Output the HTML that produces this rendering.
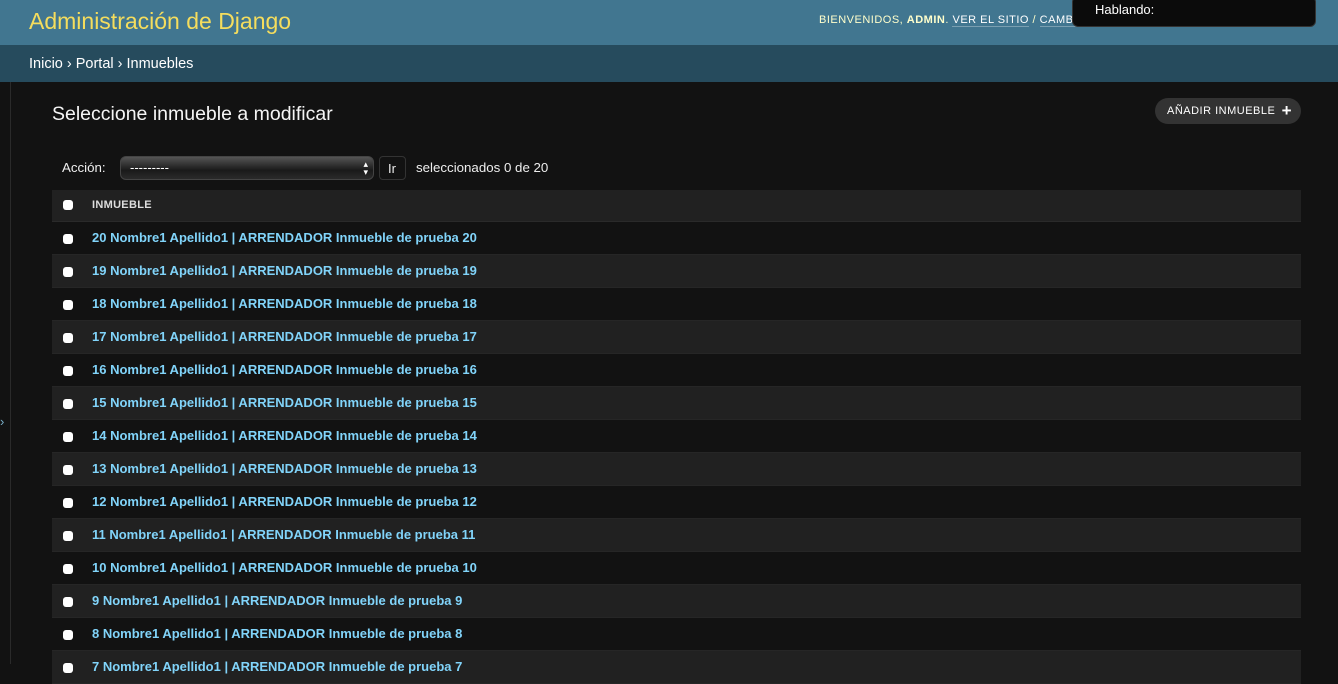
<!DOCTYPE html>
<html><head><meta charset="utf-8"><style>
*{margin:0;padding:0;box-sizing:border-box}
body{width:1338px;height:664px;overflow:hidden;background:#121212;font-family:"Liberation Sans",sans-serif;color:#eee;position:relative}
#hdr{height:45px;background:#417690;position:relative}
#hdr h1{position:absolute;left:29px;top:8px;font-size:23px;font-weight:normal;color:#f5dd5d}
#user{position:absolute;left:819px;top:14px;font-size:11px;letter-spacing:.5px;color:#ffc}
#user b{font-weight:bold}
#user u{text-decoration:none;border-bottom:1px solid rgba(255,255,255,.3);color:#fff}
#pop{position:absolute;left:1072px;top:-4px;width:244px;height:31px;background:#0b0b0b;border:1px solid #333;border-radius:6px}
#pop span{position:absolute;left:22px;top:5px;font-size:13px;color:#fff}
#bc{height:37px;background:#264b5d;padding:11px 29px;font-size:14.5px;color:#fff}
#side{position:absolute;left:10px;top:82px;width:1px;height:582px;background:#2a2a2a}
#tog{position:absolute;left:0;top:414px;color:#79aec8;font-size:13px}
h2{position:absolute;left:52px;top:103px;font-size:19.5px;font-weight:normal;color:#f5f5f5}
#add{position:absolute;left:1155px;top:98px;width:146px;height:26px;border-radius:13px;background:#333;color:#fff;font-size:11px;letter-spacing:.5px;padding:7px 12px}
#add i{position:absolute;right:9px;top:3px;font-style:normal;font-size:17px;font-weight:bold}
#act{position:absolute;left:62px;top:160px;font-size:13.3px}
#sel{position:absolute;left:120px;top:156px;width:254px;height:24px;border-radius:6px;background:linear-gradient(#555,#1a1a1a 60%,#2a2a2a);border:1px solid #444;font-size:13px;padding:3px 9px;color:#fff}
#sel i{position:absolute;right:5px;top:3px;font-size:9px;font-style:normal;line-height:8px}
#ir{position:absolute;left:379px;top:156px;width:27px;height:24px;border:1px solid #333;border-radius:4px;font-size:13px;padding:4px 8px}
#cnt{position:absolute;left:416px;top:160px;font-size:13.3px}
table{position:absolute;left:52px;top:190px;width:1249px;border-collapse:collapse}
td,th{height:33px;padding:0;font-size:13px;text-align:left}
th{height:31px;background:#212121;font-size:11px;font-weight:bold;color:#ddd;letter-spacing:.3px;border-bottom:1px solid #2a2a2a}
td{border-bottom:1px solid #262626}
tr:nth-child(odd) td{background:#212121}
.cb{width:40px;padding-left:11px}
.cb span{display:inline-block;width:10px;height:10px;background:#fff;border-radius:3px;vertical-align:middle}
td a{color:#81d4fa;font-weight:bold;text-decoration:none}
</style></head><body>
<div id="hdr"><h1>Administración de Django</h1>
<div id="user">BIENVENIDOS, <b>ADMIN</b>. <u>VER EL SITIO</u> / <u>CAMBI</u></div>
<div id="pop"><span>Hablando:</span></div></div>
<div id="bc">Inicio › Portal › Inmuebles</div>
<div id="side"></div><div id="tog">›</div>
<h2>Seleccione inmueble a modificar</h2>
<div id="add">AÑADIR INMUEBLE<i>+</i></div>
<div id="act">Acción:</div>
<div id="sel">---------<i>▴<br>▾</i></div>
<div id="ir">Ir</div>
<div id="cnt">seleccionados 0 de 20</div>
<table>
<tr><th class="cb"><span></span></th><th>INMUEBLE</th></tr>
<tr><td class="cb"><span></span></td><td><a>20 Nombre1 Apellido1 | ARRENDADOR Inmueble de prueba 20</a></td></tr>
<tr><td class="cb"><span></span></td><td><a>19 Nombre1 Apellido1 | ARRENDADOR Inmueble de prueba 19</a></td></tr>
<tr><td class="cb"><span></span></td><td><a>18 Nombre1 Apellido1 | ARRENDADOR Inmueble de prueba 18</a></td></tr>
<tr><td class="cb"><span></span></td><td><a>17 Nombre1 Apellido1 | ARRENDADOR Inmueble de prueba 17</a></td></tr>
<tr><td class="cb"><span></span></td><td><a>16 Nombre1 Apellido1 | ARRENDADOR Inmueble de prueba 16</a></td></tr>
<tr><td class="cb"><span></span></td><td><a>15 Nombre1 Apellido1 | ARRENDADOR Inmueble de prueba 15</a></td></tr>
<tr><td class="cb"><span></span></td><td><a>14 Nombre1 Apellido1 | ARRENDADOR Inmueble de prueba 14</a></td></tr>
<tr><td class="cb"><span></span></td><td><a>13 Nombre1 Apellido1 | ARRENDADOR Inmueble de prueba 13</a></td></tr>
<tr><td class="cb"><span></span></td><td><a>12 Nombre1 Apellido1 | ARRENDADOR Inmueble de prueba 12</a></td></tr>
<tr><td class="cb"><span></span></td><td><a>11 Nombre1 Apellido1 | ARRENDADOR Inmueble de prueba 11</a></td></tr>
<tr><td class="cb"><span></span></td><td><a>10 Nombre1 Apellido1 | ARRENDADOR Inmueble de prueba 10</a></td></tr>
<tr><td class="cb"><span></span></td><td><a>9 Nombre1 Apellido1 | ARRENDADOR Inmueble de prueba 9</a></td></tr>
<tr><td class="cb"><span></span></td><td><a>8 Nombre1 Apellido1 | ARRENDADOR Inmueble de prueba 8</a></td></tr>
<tr><td class="cb"><span></span></td><td><a>7 Nombre1 Apellido1 | ARRENDADOR Inmueble de prueba 7</a></td></tr>
</table>
</body></html>
